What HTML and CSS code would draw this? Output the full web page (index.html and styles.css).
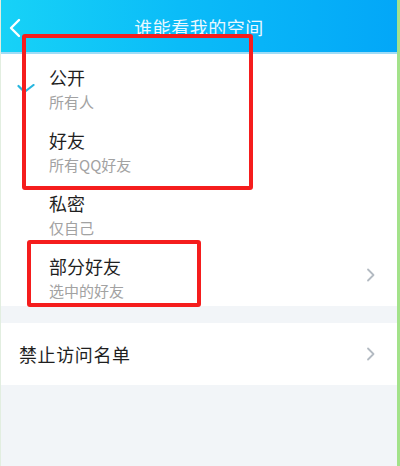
FILE: index.html
```html
<!DOCTYPE html>
<html lang="zh-CN">
<head>
<meta charset="utf-8">
<link rel="stylesheet" href="styles.css">
</head>
<body>
<div class="page">
  <header class="topbar">
    <svg class="back" width="14" height="20" viewBox="0 0 14 20"><polyline points="11,2 3,10 11,18" fill="none" stroke="#ffffff" stroke-width="2.4" stroke-linecap="round" stroke-linejoin="round"/></svg>
    <h1 class="title">谁能看我的空间</h1>
  </header>
  <section class="group">
    <div class="row">
      <svg class="check" width="18" height="10" viewBox="0 0 18 10"><polyline points="1.5,2 7.5,8 16.5,1" fill="none" stroke="#27b6df" stroke-width="2.2" stroke-linecap="round" stroke-linejoin="round"/></svg>
      <div class="text">
        <div class="name">公开</div>
        <div class="desc">所有人</div>
      </div>
    </div>
    <div class="row">
      <div class="text">
        <div class="name">好友</div>
        <div class="desc">所有QQ好友</div>
      </div>
    </div>
    <div class="row">
      <div class="text">
        <div class="name">私密</div>
        <div class="desc">仅自己</div>
      </div>
    </div>
    <div class="row">
      <div class="text">
        <div class="name">部分好友</div>
        <div class="desc">选中的好友</div>
      </div>
      <svg class="chev" width="10" height="14" viewBox="0 0 10 14"><polyline points="2,1.5 7.5,7 2,12.5" fill="none" stroke="#b3bac2" stroke-width="1.8" stroke-linecap="round" stroke-linejoin="round"/></svg>
    </div>
  </section>
  <section class="group ban">
    <div class="ban-row">
      <span class="ban-name">禁止访问名单</span>
      <svg class="chev" width="10" height="14" viewBox="0 0 10 14"><polyline points="2,1.5 7.5,7 2,12.5" fill="none" stroke="#b3bac2" stroke-width="1.8" stroke-linecap="round" stroke-linejoin="round"/></svg>
    </div>
  </section>
  <div class="mark mark-a"></div>
  <div class="mark mark-b"></div>
</div>
</body>
</html>
```
FILE: styles.css
```css
html, body {
  margin: 0;
  padding: 0;
}
body {
  font-family: "Noto Sans CJK SC", "Noto Sans", sans-serif;
  background: #f2f5f8;
}
.page {
  position: relative;
  width: 396px;
  height: 466px;
  background: #f2f5f8;
  border-left: 1px solid #e2eee0;
  border-right: 3px solid #a3e28a;
  overflow: hidden;
}
.topbar {
  height: 52px;
  border-bottom: 2px solid #9fdcf6;
  background: linear-gradient(90deg, #17d2f7 0%, #0bbcf8 45%, #03a7f8 100%);
  display: flex;
  align-items: center;
  justify-content: center;
  position: relative;
}
.back {
  position: absolute;
  left: 7px;
  top: 18px;
}
.title {
  margin: 0;
  font-size: 18px;
  font-weight: 400;
  color: #eaf8ff;
  letter-spacing: 0.5px;
  line-height: 24px;
  margin-top: 2px;
}
.group {
  background: #ffffff;
}
.row {
  height: 63px;
  box-sizing: border-box;
  padding: 11px 21px 0 48px;
  display: flex;
  align-items: flex-start;
  position: relative;
}
.text {
  flex: 1;
}
.name {
  font-size: 18px;
  line-height: 24px;
  color: #1f1f1f;
}
.desc {
  margin-top: 3px;
  font-size: 15px;
  line-height: 20px;
  color: #a2a2a2;
}
.check {
  position: absolute;
  left: 16px;
  top: 30px;
}
.row .chev {
  margin-top: 14px;
}
.ban {
  margin-top: 17px;
}
.ban-row {
  height: 62px;
  display: flex;
  align-items: center;
  padding: 0 21px 0 18px;
}
.ban-name {
  flex: 1;
  font-size: 18px;
  color: #1f1f1f;
  letter-spacing: 0.6px;
}
.mark {
  position: absolute;
  border: 4px solid #f51d1d;
  border-radius: 3px;
  box-sizing: border-box;
}
.mark-a {
  left: 21px;
  top: 34px;
  width: 231px;
  height: 156px;
}
.mark-b {
  left: 26px;
  top: 240px;
  width: 174px;
  height: 67px;
}
```
